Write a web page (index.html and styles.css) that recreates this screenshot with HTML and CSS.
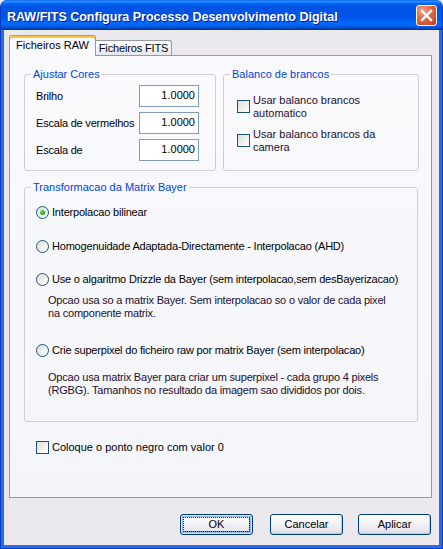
FILE: index.html
```html
<!DOCTYPE html>
<html>
<head>
<meta charset="utf-8">
<link rel="stylesheet" href="styles.css">
</head>
<body>
<div class="window">
  <div class="titlebar">
    <span class="title">RAW/FITS Configura Processo Desenvolvimento Digital</span>
    <span class="close">
      <svg width="19" height="19" viewBox="0 0 19 19"><path d="M5 5 L14 14 M14 5 L5 14" stroke="#fff" stroke-width="2.4" stroke-linecap="square" fill="none"/></svg>
    </span>
  </div>
  <div class="client">
    <div class="tabs">
      <div class="tab active">Ficheiros RAW</div>
      <div class="tab">Ficheiros FITS</div>
    </div>
    <div class="panel">
      <div class="toprow">
        <fieldset class="group g1">
          <legend>Ajustar Cores</legend>
          <div class="gbody">
            <div class="field"><span class="flabel">Brilho</span><span class="input">1.0000</span></div>
            <div class="field"><span class="flabel">Escala de vermelhos</span><span class="input">1.0000</span></div>
            <div class="field"><span class="flabel">Escala de</span><span class="input">1.0000</span></div>
          </div>
        </fieldset>
        <fieldset class="group g2">
          <legend>Balanco de brancos</legend>
          <div class="gbody">
            <div class="check two"><span class="box"></span><span class="ctext">Usar balanco brancos<br>automatico</span></div>
            <div class="check two"><span class="box"></span><span class="ctext">Usar balanco brancos da<br>camera</span></div>
          </div>
        </fieldset>
      </div>
      <fieldset class="group g3">
        <legend>Transformacao da Matrix Bayer</legend>
        <div class="gbody">
          <div class="opt r1"><span class="radio on"></span><span>Interpolacao bilinear</span></div>
          <div class="opt r2"><span class="radio"></span><span>Homogenuidade Adaptada-Directamente - Interpolacao (AHD)</span></div>
          <div class="opt r3"><span class="radio"></span><span>Use o algaritmo Drizzle da Bayer (sem interpolacao,sem desBayerizacao)</span></div>
          <div class="desc d1">Opcao usa so a matrix Bayer. Sem interpolacao so o valor de cada pixel<br>na componente matrix.</div>
          <div class="opt r4"><span class="radio"></span><span>Crie superpixel do ficheiro raw por matrix Bayer (sem interpolacao)</span></div>
          <div class="desc d2">Opcao usa matrix Bayer para criar um superpixel - cada grupo 4 pixels<br>(RGBG). Tamanhos no resultado da imagem sao divididos por dois.</div>
        </div>
      </fieldset>
      <div class="check black"><span class="box"></span><span>Coloque o ponto negro com valor 0</span></div>
    </div>
    <div class="buttons">
      <div class="btn default"><span class="focus">OK</span></div>
      <div class="btn cancel">Cancelar</div>
      <div class="btn apply">Aplicar</div>
    </div>
  </div>
</div>
</body>
</html>
```
FILE: styles.css
```css
html, body {
  margin: 0;
  padding: 0;
}
body {
  width: 443px;
  height: 549px;
  overflow: hidden;
  background: #ECECEC;
  font-family: "Liberation Sans", Arial, sans-serif;
  font-size: 11px;
  color: #000;
}
.window {
  width: 443px;
  height: 549px;
  box-sizing: border-box;
  display: flex;
  flex-direction: column;
  border-radius: 7px 7px 0 0;
  background: #2B6BEA;
  border: 1px solid #0A3CC2;
  border-top: none;
  overflow: hidden;
}
.titlebar {
  height: 30px;
  flex: none;
  display: flex;
  align-items: flex-start;
  margin: 0 -1px;
  padding: 0 6px 0 7px;
  border-radius: 7px 7px 0 0;
  background: linear-gradient(to bottom, #0058EE 0%, #3593FF 4%, #288EFF 6%, #127DFF 8%, #036FFC 10%, #0262EE 14%, #0057E5 20%, #0054E3 24%, #0055EB 56%, #005BF5 66%, #026AFE 76%, #0062EF 86%, #0052D6 92%, #0040AB 96%, #003092 100%);
}
.title {
  flex: 1;
  color: #fff;
  font-weight: bold;
  font-size: 12.5px;
  line-height: 14px;
  padding-top: 10px;
  text-shadow: 1px 1px 0 #0A1E8C;
  white-space: nowrap;
}
.close {
  flex: none;
  width: 21px;
  height: 21px;
  margin-top: 5px;
  box-sizing: border-box;
  border: 1px solid #fff;
  border-radius: 3px;
  background: radial-gradient(circle at 30% 25%, #F3A08A 0%, #E26842 45%, #D04B24 80%, #BC3C1C 100%);
  display: flex;
  align-items: center;
  justify-content: center;
}
.client {
  flex: 1;
  margin: 0 3px 3px;
  background: #EBE9ED;
  display: flex;
  flex-direction: column;
  padding: 5px 0 0 5px;
}
.tabs {
  display: flex;
  align-items: flex-end;
  height: 21px;
  margin-bottom: -1px;
  position: relative;
  z-index: 1;
}
.tab {
  box-sizing: border-box;
  text-align: center;
  line-height: 13px;
}
.tab.active {
  width: 87px;
  height: 21px;
  padding-top: 3px;
  border: 1px solid #919B9C;
  border-top: 1px solid #E68B2C;
  border-bottom: none;
  border-radius: 3px 3px 0 0;
  box-shadow: inset 0 2px 0 #FFC83C;
  background: #FAFAFD;
}
.tab:not(.active) {
  width: 76px;
  height: 15px;
  margin-bottom: 1px;
  padding-top: 1px;
  border: 1px solid #919B9C;
  border-left: none;
  border-bottom: none;
  border-radius: 0 3px 0 0;
  background: linear-gradient(to bottom, #FFFFFF, #E6E8F0);
  letter-spacing: -0.15px;
}
.panel {
  width: 423px;
  height: 443px;
  box-sizing: border-box;
  border: 1px solid #919B9C;
  background: linear-gradient(to bottom, #FAFAFD, #F4F5FA);
  padding: 12px 12px 0 14px;
}
.toprow {
  display: flex;
  gap: 7px;
}
.group {
  margin: 0;
  padding: 0;
  min-width: 0;
  border: 1px solid #D0D0D4;
  border-radius: 3px;
}
.group legend {
  margin-left: 6px;
  padding: 0 2px;
  line-height: 13px;
  color: #0046D5;
}
.g1 {
  width: 192px;
  box-sizing: border-box;
}
.g1 .gbody {
  padding: 4px 16px 9px 11px;
}
.field {
  display: flex;
  align-items: center;
  height: 22px;
  line-height: 13px;
}
.field + .field {
  margin-top: 5px;
}
.flabel {
  flex: 1;
  white-space: nowrap;
  letter-spacing: -0.2px;
}
.input {
  width: 60px;
  height: 22px;
  box-sizing: border-box;
  border: 1px solid #7F9DB9;
  background: #fff;
  text-align: right;
  padding-right: 3px;
  line-height: 18px;
}
.g2 {
  flex: 1;
}
.g2 .gbody {
  padding: 13px 10px 0 13px;
}
.check {
  display: flex;
  align-items: center;
  line-height: 13px;
}
.check.two + .check.two {
  margin-top: 8px;
}
.ctext {
  color: #1E0E2C;
}
.box {
  flex: none;
  width: 13px;
  height: 13px;
  box-sizing: border-box;
  border: 1px solid #1C5180;
  background: linear-gradient(135deg, #DCDCD7 0%, #F2F2EE 60%, #FFFFFF 100%);
  margin-right: 4px;
}
.check.two .box {
  margin-top: -2px;
  margin-right: 3px;
}
.g3 {
  margin-top: 10px;
  margin-right: 1px;
}
.g3 .gbody {
  padding: 12px 8px 24px 11px;
  letter-spacing: -0.2px;
}
.opt {
  display: flex;
  align-items: center;
  height: 13px;
  line-height: 13px;
  white-space: nowrap;
}
.radio {
  flex: none;
  width: 13px;
  height: 13px;
  box-sizing: border-box;
  border-radius: 50%;
  border: 1px solid #1C5180;
  background: linear-gradient(135deg, #DCDCD7 0%, #F4F4F0 60%, #FFFFFF 100%);
  margin-right: 3px;
  display: flex;
  align-items: center;
  justify-content: center;
}
.radio.on::after {
  content: "";
  width: 5px;
  height: 5px;
  border-radius: 50%;
  background: radial-gradient(circle at 35% 35%, #60E05A, #21A121 70%, #1A8A1A);
}
.r2 { margin-top: 21px; }
.r3 { margin-top: 20px; }
.desc {
  line-height: 13px;
  padding-left: 12px;
  color: #1E0E2C;
  white-space: nowrap;
}
.d1 { margin-top: 8px; }
.r4 { margin-top: 24px; }
.d2 { margin-top: 14px; }
.check.black {
  margin-top: 19px;
  margin-left: 12px;
}
.check.black .box {
  margin-right: 3px;
}
.buttons {
  display: flex;
  justify-content: flex-end;
  margin-top: 16px;
  padding-right: 8px;
}
.btn {
  width: 73px;
  height: 21px;
  box-sizing: border-box;
  border: 1px solid #003C74;
  border-radius: 3px;
  background: linear-gradient(to bottom, #FFFFFF 0%, #F4F4F8 40%, #E6E7EE 80%, #D4D6E0 100%);
  box-shadow: inset -1px -1px 0 #C8CAD6;
  text-align: center;
  line-height: 19px;
}
.btn.default {
  box-shadow: inset 0 0 0 1px #CEE7FF, inset 0 0 0 2px #98B8EA, inset -1px -1px 0 2px #6982EE;
  padding: 2px;
  line-height: 13px;
}
.btn.default .focus {
  display: block;
  height: 15px;
  box-sizing: border-box;
  border: 1px dotted #222;
  line-height: 13px;
}
.btn.cancel { margin-left: 17px; }
.btn.apply { margin-left: 15px; }
```
